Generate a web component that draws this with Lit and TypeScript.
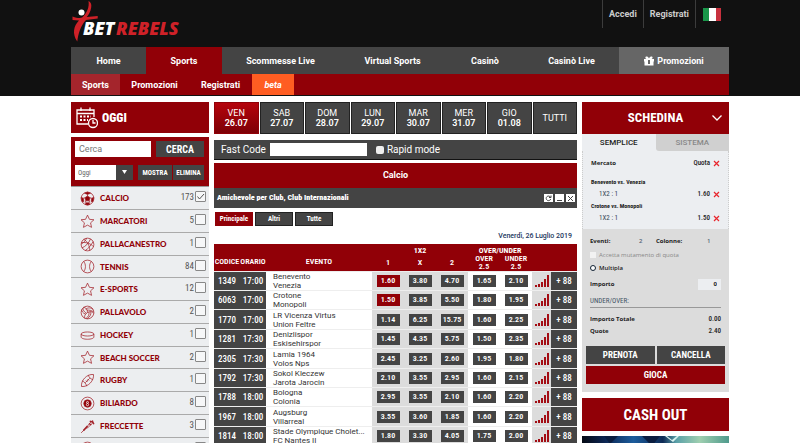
import { LitElement, html, css, svg } from "lit";
import { customElement, state } from "lit/decorators.js";
import { classMap } from "lit/directives/class-map.js";

const star = svg`<path d="M10 1.500l2.600 5.600 6 .6-4.500 4.100 1.300 6L10 14.800l-5.400 3 1.300-6L1.400 7.700l6-.6z"/>`;
const ICONS: Record<string, unknown> = {
  calcio: svg`<circle cx="10" cy="10" r="8.500"/><path class="solid" d="M10 6.500l3.500 2.600-1.300 4H7.800l-1.300-4zM6 3l4 1.500L14 3l-4-1.600zM1.600 8.500l2.700 1 .8 4.500-2.200.2zM18.400 8.500l-2.700 1-.8 4.500 2.200.2zM7 18l1-2.200h4L13 18l-3 .7z"/><path d="M10 4.500v2M6.500 9l-2.200.6M13.500 9l2.200.6M7.800 13l-.9 2.800M12.200 13l.9 2.800"/>`,
  star,
  basket: svg`<circle cx="10" cy="10" r="8.500"/><path d="M2 7.500C8 6.500 15 9 18 13M5 3c5 3 8 9 8 15M9 1.600C6 7 3 9 1.600 9.500M14 2.600C12 8 7 13 2.600 14.500M17.500 6C15 11 11 15.500 7 18"/>`,
  tennis: svg`<circle cx="10" cy="10" r="8.500"/><path d="M5 3.200c3 4 3 9.600 0 13.600M15 3.200c-3 4-3 9.600 0 13.600"/>`,
  volley: svg`<circle cx="10" cy="10" r="8.500"/><path d="M10 10c0-4-2-6.500-5.500-7M10 10c3.500-2 7-1.500 8.300 1M10 10c-3.500 2-4.500 5-3.500 7.800M7.500 5.500C11 3 15 3.500 17.500 6M14.500 9C15 13 13 16 9.500 18.400M7.200 12C3.800 11 2 8 2.300 6M9.200 7C12 6.500 15 7 18 9M12 9.200c.5 4-1 6.500-4 8.800M8.300 11C5.500 9 4 7 4 4.200"/>`,
  hockey: svg`<ellipse cx="10" cy="8" rx="8.500" ry="2.700"/><path d="M1.500 8v4c0 1.600 3.500 3 8.500 3s8.500-1.400 8.500-3V8"/>`,
  rugby: svg`<path d="M2 18C1 10 9 1 18 2 19 10 11 19 2 18zM3 10.500c2.500 1 5 3.500 6 7M11 2.800c1 3 3 5 6 6M7 13l6-6M8 10l2 2M10 8l2 2"/>`,
  biliardo: svg`<circle cx="10" cy="10" r="8.500"/><circle class="solid" cx="10" cy="10" r="5"/><g class="light"><circle cx="10" cy="8.500" r="1.300"/><circle cx="10" cy="11.500" r="1.500"/></g>`,
  dart: svg`<path d="M1.500 18.500L9.500 10.500M8 12l5.500-7L17 2l-.5 3.500L10 12z"/><path d="M13 3l4 1 1.500 3M12 6l3 2M4.500 15.500L10 9.500" stroke-width="2"/>`,
};

const SPORTS = [
  ["calcio", "CALCIO", "173"], ["star", "MARCATORI", "5"], ["basket", "PALLACANESTRO", "1"],
  ["tennis", "TENNIS", "84"], ["star", "E-SPORTS", "12"], ["volley", "PALLAVOLO", "2"],
  ["hockey", "HOCKEY", "1"], ["star", "BEACH SOCCER", "2"], ["rugby", "RUGBY", "1"],
  ["biliardo", "BILIARDO", "8"], ["dart", "FRECCETTE", "3"], ["volley", "", ""],
] as const;

const DAYS = [["VEN", "26.07"], ["SAB", "27.07"], ["DOM", "28.07"], ["LUN", "29.07"],
  ["MAR", "30.07"], ["MER", "31.07"], ["GIO", "01.08"], ["TUTTI", ""]];

const MATCHES: [string, string, string, string, string[]][] = [
  ["1349", "17:00", "Benevento", "Venezia", ["1.60", "3.80", "4.70", "1.65", "2.10"]],
  ["6063", "17:00", "Crotone", "Monopoli", ["1.50", "3.85", "5.50", "1.80", "1.95"]],
  ["1770", "17:00", "LR Vicenza Virtus", "Union Feltre", ["1.14", "6.25", "15.75", "1.60", "2.25"]],
  ["1281", "17:30", "Denizlispor", "Eskisehirspor", ["1.45", "4.35", "5.75", "1.50", "2.35"]],
  ["2305", "17:30", "Lamia 1964", "Volos Nps", ["2.45", "3.25", "2.60", "1.95", "1.80"]],
  ["1792", "17:30", "Sokol Kleczew", "Jarota Jarocin", ["2.10", "3.55", "2.95", "1.60", "2.15"]],
  ["1788", "18:00", "Bologna", "Colonia", ["2.95", "3.55", "2.10", "1.60", "2.20"]],
  ["1967", "18:00", "Augsburg", "Villarreal", ["3.55", "3.60", "1.85", "1.60", "2.20"]],
  ["1814", "18:00", "Stade Olympique Cholet...", "FC Nantes II", ["1.80", "3.30", "4.05", "1.75", "2.00"]],
];

const base = css`
  * { box-sizing: border-box; }
  button, input, select { font: inherit; color: inherit; border: 0; border-radius: 0; padding: 0; margin: 0; background: none; }
  a { color: inherit; text-decoration: none; }
  .narrow { font-family: "Roboto Condensed", "Liberation Sans Narrow", Roboto, sans-serif; }
`;

@customElement("site-header")
class SiteHeader extends LitElement {
  static styles = [base, css`
    :host { display: block; background: #111; padding: 0 71px 1px; color: #fff; font: 700 9px/12px Roboto, sans-serif; }
    .top { display: flex; justify-content: space-between; align-items: flex-start; height: 47px; }
    .logo { display: block; width: 110px; height: 44px; }
    .logo svg { display: block; }
    .word { font: italic 900 18px "Noto Sans", sans-serif; }
    .account { display: flex; height: 28px; }
    .account a { display: flex; align-items: center; border-left: 1px solid #3c3c3c; padding: 0 6px; color: #ccc; }
    .account .flag { padding: 0 8px 0 7px; }
    .nav { display: grid; grid-template-columns: 75fr 76fr 117fr 107fr 78fr 95fr 110fr; height: 27px; background: #444; }
    .nav a, .sub a { display: flex; align-items: center; justify-content: center; gap: 3px; white-space: nowrap; }
    .nav .on { background: #910007; }
    .nav .promo { background: #666; }
    .sub { display: grid; grid-template-columns: 49px 69px 63px 42px; height: 21px; background: #910007; }
    .sub .on { background: #a4252c; }
    .sub .beta { background: #ff5d22; font-style: italic; }
  `];
  render() {
    return html`
      <div class="top">
        <a class="logo" href="#" aria-label="Bet Rebels">
          <svg width="110" height="44" viewBox="0 0 110 44">
            <circle cx="10.500" cy="12.500" r="3" fill="#fff"/>
            <path d="M16.500 1q3.500 1.500 2.700 6.500c-.7 4-2.500 7.500-4.500 9.500l11-1v2.500L14 20C9 25 6 34 5.300 41.500 0 34 1.500 26 7 20.500L.5 20v-3.500c5 1.800 8 2 10 .8C15 13 17.500 7 16.500 1z" transform="translate(1 0)" fill="#cf2128"/>
            <text class="word" x="12" y="35" fill="#fff">BET</text>
            <text class="word" x="45" y="35" fill="#cf2128">REBELS</text>
          </svg>
        </a>
        <div class="account">
          <a href="#">Accedi</a><a href="#">Registrati</a>
          <a class="flag" href="#" aria-label="Italiano"><svg width="18" height="13" viewBox="0 0 18 13"><path fill="#199549" d="M0 0h6v13H0z"/><path fill="#fff" d="M6 0h7v13H6z"/><path fill="#c8313e" d="M13 0h5v13h-5z"/></svg></a>
        </div>
      </div>
      <nav class="nav">
        <a href="#">Home</a><a class="on" href="#">Sports</a><a href="#">Scommesse Live</a>
        <a href="#">Virtual Sports</a><a href="#">Casinò</a><a href="#">Casinò Live</a>
        <a class="promo" href="#"><svg width="10" height="10" viewBox="0 0 20 20" fill="#fff"><path fill-rule="evenodd" d="M0 6h5C1 4 3 0 6 1c2 .5 3 2 4 4 1-2 2-3.500 4-4 3-1 5 3 1 5h5v5h-1v8H1v-8H0zM8 8v8h4V8z"/></svg>Promozioni</a>
      </nav>
      <nav class="sub">
        <a class="on" href="#">Sports</a><a href="#">Promozioni</a><a href="#">Registrati</a><a class="beta" href="#">beta</a>
      </nav>`;
  }
}

@customElement("sports-menu")
class SportsMenu extends LitElement {
  static styles = [base, css`
    :host { display: block; }
    .today { display: flex; align-items: center; gap: 4px; height: 31px; width: 100%; padding-left: 5px; background: #910007; color: #fff; font-weight: 900; font-size: 12px; }
    .search { display: grid; grid-template-columns: 1fr 48px; gap: 8px 5px; margin-top: 4px; padding: 4px 5px 6px 4px; background: #910007; color: #fff; border-bottom: 1px solid #999; }
    .search .query { height: 16px; min-width: 0; background: #fff; color: #666; padding-left: 4px; font-family: Roboto, sans-serif; font-size: 9px; }
    .query::placeholder { color: #777; opacity: 1; }
    .dark { background: #444; font-weight: 700; text-align: center; }
    .find { font-size: 10px; }
    .filter { grid-column: 1 / -1; display: grid; grid-template-columns: 58px 1fr 31px; column-gap: 1px; height: 15px; font-size: 7px; }
    .filter .show { margin-left: 4px; }
    .pick { position: relative; display: grid; background: linear-gradient(90deg, #fff 41px, #444 41px); }
    .pick select { appearance: none; color: #666; padding-left: 3px; width: 100%; }
    .pick svg { position: absolute; right: 5px; top: 5px; pointer-events: none; }
    ul { list-style: none; margin: 0; padding: 0; }
    li { display: grid; grid-template-columns: 20px 1fr auto 11px; align-items: center; height: 23px; padding: 0 3px 0 6px; background: #eceef0; border-bottom: 1px solid #aaa; color: #910007; }
    li:nth-child(4n) { height: 22px; }
    li > svg { width: 15px; height: 15px; fill: none; stroke: #a3222a; stroke-width: 1; margin-left: 3px; }
    li svg .solid { fill: #910007; }
    li svg .light { stroke: #fff; }
    li label { font: 900 8px/12px Lato, sans-serif; padding-left: 3px; white-space: nowrap; }
    li .count { color: #555; font-size: 9px; padding-right: 1px; align-self: start; line-height: 20px; }
    .box { display: grid; position: relative; height: 100%; }
    .box input { appearance: none; width: 11px; height: 11px; border: 1px solid #888; border-radius: 1px; margin-top: 4px; background: #f6f7f8; }
    .box svg { position: absolute; left: 0; top: 4px; width: 11px; height: 11px; fill: none; stroke: #555; pointer-events: none; }
  `];
  render() {
    return html`
      <button class="today narrow">
        <svg width="22" height="23" viewBox="0 0 22 23" fill="none" stroke="#fff" stroke-width="1.300"><path d="M12 18H1V4h17v7M1 7.500h17M5 1.500V5M14 1.500V5"/><path stroke-dasharray="2 1.500" stroke-width="1.800" d="M4 10.500h11M4 14h8"/><circle cx="17" cy="17" r="4.500"/><path d="M17 14v3h2.500"/></svg>
        OGGI</button>
      <form class="search narrow">
        <input class="query" placeholder="Cerca" aria-label="Cerca">
        <button class="dark find" type="button">CERCA</button>
        <div class="filter">
          <span class="pick"><select aria-label="Periodo"><option>Oggi</option></select><svg width="7" height="5" viewBox="0 0 7 5"><path fill="#fff" d="M1 0h5L3.500 4z"/></svg></span>
          <button class="dark show" type="button">MOSTRA</button>
          <button class="dark" type="button">ELIMINA</button>
        </div>
      </form>
      <ul>${SPORTS.map(([icon, name, n], i) => html`
        <li><svg viewBox="0 0 20 20">${ICONS[icon]}</svg>
          <label for="sport-${i}">${name}</label><span class="count narrow">${n}</span>
          <span class="box"><input id="sport-${i}" type="checkbox" .checked=${i === 0}>${i === 0 ? html`<svg viewBox="0 0 11 11"><path d="M2.500 5.500l2 2.500 4.500-5"/></svg>` : ""}</span>
        </li>`)}</ul>`;
  }
}

@customElement("odds-board")
class OddsBoard extends LitElement {
  @state() private day = 0;
  @state() private picks = new Set(["0-0", "1-0"]);
  private toggle(key: string) {
    const next = new Set(this.picks);
    next.has(key) ? next.delete(key) : next.add(key);
    this.picks = next;
  }
  static styles = [base, css`
    :host { display: block; min-width: 0; color: #fff; }
    .days { display: grid; grid-template-columns: repeat(8, 1fr); column-gap: 1px; height: 32px; }
    .days button { background: #444; border: 1px solid #222; font: 400 9px/10px Roboto, sans-serif; }
    .days b { font-weight: 600; }
    .days .on { background: linear-gradient(#b5040c, #7d0006); border-color: #910007; }
    .fast { display: flex; align-items: center; height: 20px; margin-top: 6px; padding: 0 7px; background: #444; border-bottom: 1px solid #111; font: 400 10px/12px Roboto, sans-serif; }
    .fast .code { width: 97px; height: 13px; background: #fff; color: #333; margin: 0 9px 0 4px; }
    .fast .rapid { appearance: none; width: 8px; height: 8px; border-radius: 2px; background: #eee; margin-right: 3px; }
    h1 { margin: 3px 0 0; background: #910007; text-align: center; font: 700 9px/25px Roboto, sans-serif; }
    .league { display: flex; align-items: center; gap: 2px; height: 20px; background: #444; padding: 0 2px 0 3px; }
    h2 { margin: 0; font-size: 8px; line-height: 12px; font-weight: 900; flex: 1; }
    .league button { display: grid; place-items: center; width: 9px; height: 8px; background: #fff; }
    .tabs { display: grid; grid-template-columns: repeat(3, 38px); gap: 2px; margin: 4px 0 0 1px; }
    .tabs button { height: 14px; background: #444; border: 1px solid #222; font-size: 7px; font-weight: 700; }
    .tabs .on { background: #910007; border-color: #910007; }
    .date { margin: 5px 5px 3px 0; text-align: right; color: #1b365d; font-size: 7px; line-height: 10px; font-weight: 500; }
    table { width: 100%; border-collapse: collapse; table-layout: fixed; }
    .c-code { width: 26px; } .c-odd { width: 32px; } .c-sig { width: 19px; }
    th, td { padding: 0; text-align: center; }
    thead { background: #910007; font-size: 8px; }
    thead tr:first-child { height: 11px; }
    thead tr:last-child { height: 16px; }
    thead th { line-height: 8px; vertical-align: middle; font-weight: 600; }
    thead .low { vertical-align: bottom; padding-bottom: 5px; }
    thead .group { vertical-align: bottom; font-weight: 700; }
    tbody tr { height: 19px; border-top: 1px solid #eee; }
    tbody tr:nth-child(5n + 3), tbody tr:nth-child(5n) { height: 20px; }
    .dark { background: #444; font-size: 9px; font-weight: 500; }
    .event { background: #fff; color: #333; text-align: left; padding-left: 7px; font: 400 8px/9px Roboto, sans-serif; white-space: nowrap; overflow: hidden; }
    .gray { background: #dcdcdc; }
    .odd { display: block; width: 23px; height: 12px; margin: 0 auto; background: #444; font-size: 8px; line-height: 12px; font-weight: 600; }
    .odd.on { background: #910007; }
    td svg { display: block; margin: 0 auto; }
  `];
  render() {
    return html`
      <nav class="days">${DAYS.map(([d, n], i) => html`<button class=${classMap({ on: i === this.day })} @click=${() => (this.day = i)}>${d}${n ? html`<br><b>${n}</b>` : ""}</button>`)}</nav>
      <div class="fast"><label for="code">Fast Code</label><input id="code" class="code"><input id="rapid" class="rapid" type="checkbox"><label for="rapid">Rapid mode</label></div>
      <h1>Calcio</h1>
      <div class="league narrow"><h2>Amichevole per Club, Club Internazionali</h2>
        <button aria-label="Aggiorna"><svg width="7" height="7" viewBox="0 0 7 7" fill="none" stroke="#444"><path d="M5.500 2.200A2.300 2.300 0 1 0 5.700 4M6 .5v2H4"/></svg></button>
        <button aria-label="Riduci"><svg width="7" height="7" viewBox="0 0 7 7" stroke="#444"><path d="M1 5.500h5"/></svg></button>
        <button aria-label="Chiudi"><svg width="7" height="7" viewBox="0 0 7 7" stroke="#444"><path d="M1 1l5 5M6 1L1 6"/></svg></button>
      </div>
      <div class="tabs narrow"><button class="on">Principale</button><button>Altri</button><button>Tutte</button></div>
      <div class="date">Venerdì, 26 Luglio 2019</div>
      <table class="narrow">
        <colgroup><col class="c-code"><col class="c-code"><col><col class="c-odd" span="5"><col class="c-sig"><col class="c-code"></colgroup>
        <thead>
          <tr><th rowspan="2" class="low">CODICE</th><th rowspan="2" class="low">ORARIO</th><th rowspan="2" class="low">EVENTO</th><th colspan="3" class="group">1X2</th><th colspan="2" class="group">OVER/UNDER</th><th rowspan="2" colspan="2"></th></tr>
          <tr><th>1</th><th>X</th><th>2</th><th>OVER<br>2.5</th><th>UNDER<br>2.5</th></tr>
        </thead>
        <tbody>${MATCHES.map(([code, time, a, b, odds], r) => html`
          <tr><td class="dark">${code}</td><td class="dark">${time}</td><td class="event">${a}<br>${b}</td>
            ${odds.map((o, c) => { const key = `${r}-${c}`; return html`<td class=${classMap({ gray: c < 3 })}><button class=${classMap({ odd: true, on: this.picks.has(key) })} @click=${() => this.toggle(key)}>${o}</button></td>`; })}
            <td class="gray"><svg width="14" height="12" viewBox="0 0 14 12" fill="#a30d14"><path d="M0 10h2v2H0zM3 9h2v3H3zM6 7h2v5H6zM9 4h2v8H9zM12 0h2v12h-2z"/></svg></td>
            <td class="dark">+ 88</td></tr>`)}
        </tbody>
      </table>`;
  }
}

@customElement("bet-slip")
class BetSlip extends LitElement {
  static styles = [base, css`
    :host { display: block; color: #222; font: 700 6px/12px "Open Sans", sans-serif; }
    .head { display: grid; grid-template-columns: 24px 1fr 24px; align-items: center; height: 32px; width: 100%; background: #910007; color: #fff; font-size: 13px; font-weight: 700; }
    .head svg { justify-self: center; }
    .head span { grid-column: 2; }
    .modes { display: grid; grid-template-columns: 1fr 1fr; height: 17px; font: 500 8px/12px Roboto, sans-serif; background: #eceef1; }
    .modes .off { background: #d0d0d0; color: #888; border-radius: 0 0 0 3px; }
    .bets { padding: 5px 8px; background: #eceef1; border: 1px dotted #ccc; border-width: 0 1px; }
    .line { display: grid; grid-template-columns: 1fr auto 10px; align-items: center; height: 12px; }
    .line.first { height: 14px; margin-bottom: 6px; }
    .line button { display: grid; place-items: center end; }
    .sel { padding-left: 8px; font-weight: 400; color: #345; font-size: 7px; }
    .match { font-size: 6px; font-weight: 700; }
    .val { font-size: 7px; font-weight: 500; }
    .sum { padding: 5px 4px 8px; background: #dcdcdc; }
    .pad { padding: 0 4px; }
    .row { display: flex; align-items: center; justify-content: space-between; height: 12px; }
    .counts { display: grid; grid-template-columns: 49px 17px 51px 1fr; height: 13px; }
    .counts b { color: #567; font-weight: 600; }
    .check { gap: 3px; justify-content: flex-start; height: 15px; color: #888; font-weight: 400; font-size: 6px; }
    .check input { appearance: none; width: 6px; height: 6px; background: #f2f2f2; }
    .multi { gap: 3px; justify-content: flex-start; height: 12px; font-weight: 600; }
    .multi input { appearance: none; width: 6px; height: 6px; border: 1px solid #123; border-radius: 50%; background: #fff; }
    .stake { height: 12px; margin-top: 4px; }
    .stake input { width: 23px; height: 11px; background: #eceef1; text-align: right; padding-right: 4px; }
    .rule { margin: 5px 4px 4px; border-bottom: 1px solid #999; padding-top: 1px; font-size: 7px; font-weight: 400; color: #456; line-height: 11px; }
    .tot { margin-top: 5px; }
    .btns { display: grid; grid-template-columns: 1fr 1fr; gap: 2px; margin-top: 9px; font-size: 9px; font-weight: 700; color: #fff; }
    .btns button { background: #444; height: 18px; }
    .btns .play { grid-column: 1 / -1; background: #910007; }
    .cash { width: 100%; height: 33px; margin-top: 6px; background: #910007; color: #fff; font-size: 15px; font-weight: 700; }
    .banner { display: block; width: 100%; height: 40px; margin-top: 5px; }
  `];
  render() {
    const x = html`<svg width="7" height="7" viewBox="0 0 7 7" stroke="#e8262d" stroke-width="1.200"><path d="M1 1l5 5M6 1L1 6"/></svg>`;
    return html`
      <button class="head narrow"><span>SCHEDINA</span><svg width="10" height="6" viewBox="0 0 10 6" fill="none" stroke="#fff" stroke-width="1.300"><path d="M.5.5L5 5 9.500.5"/></svg></button>
      <div class="modes"><button>SEMPLICE</button><button class="off">SISTEMA</button></div>
      <section class="bets">
        <div class="line first"><span>Mercato</span><span class="narrow val">Quota</span><button aria-label="Rimuovi tutto">${x}</button></div>
        ${[["Benevento vs. Venezia", "1.60"], ["Crotone vs. Monopoli", "1.50"]].map(([m, v]) => html`
          <div class="line narrow"><span class="match">${m}</span></div>
          <div class="line"><span class="sel narrow">1X2 : 1</span><span class="val narrow">${v}</span><button aria-label="Rimuovi">${x}</button></div>`)}
      </section>
      <section class="sum">
        <div class="pad">
          <div class="row counts"><span>Eventi:</span><b>2</b><span>Colonne:</span><b>1</b></div>
          <label class="row check"><input type="checkbox">Accetta mutamento di quota</label>
          <label class="row multi"><input type="radio">Multipla</label>
        </div>
        <div class="row stake pad"><label for="stake">Importo</label><input id="stake" value="0"></div>
        <div class="rule narrow">UNDER/OVER:</div>
        <div class="row pad tot"><span>Importo Totale</span><span class="val narrow">0.00</span></div>
        <div class="row pad"><span>Quote</span><span class="val narrow">2.40</span></div>
        <div class="btns narrow"><button>PRENOTA</button><button>CANCELLA</button><button class="play">GIOCA</button></div>
      </section>
      <button class="cash narrow">CASH OUT</button>
      <svg class="banner" viewBox="0 0 147 40" preserveAspectRatio="none"><defs><linearGradient id="sky"><stop stop-color="#050a14"/><stop offset=".15" stop-color="#0c2450"/><stop offset=".35" stop-color="#1c5c9c"/><stop offset=".55" stop-color="#0d2a55"/><stop offset=".64" stop-color="#5aa0a8"/><stop offset=".8" stop-color="#9fcfb0"/><stop offset="1" stop-color="#4f9a8c"/></linearGradient></defs><path fill="url(#sky)" d="M0 0h147v40H0z"/><path fill="#d8f2f0" d="M85 0l5 4 5-4h2l-6 6-8-6z"/><path fill="#0a1d40" d="M22 0h14l-8 8zM60 0h18l-8 10z"/></svg>`;
  }
}

@customElement("app-root")
class AppRoot extends LitElement {
  static styles = [base, css`
    :host { display: block; height: 100vh; overflow-y: auto; scrollbar-width: none; background: #fff; font-family: Roboto, sans-serif; }
    .page { display: grid; grid-template-columns: 138px minmax(0, 1fr) 147px; align-items: start; gap: 5px; padding: 6px 71px 0; }
  `];
  render() {
    return html`<site-header></site-header><main class="page"><sports-menu></sports-menu><odds-board></odds-board><bet-slip></bet-slip></main>`;
  }
}
